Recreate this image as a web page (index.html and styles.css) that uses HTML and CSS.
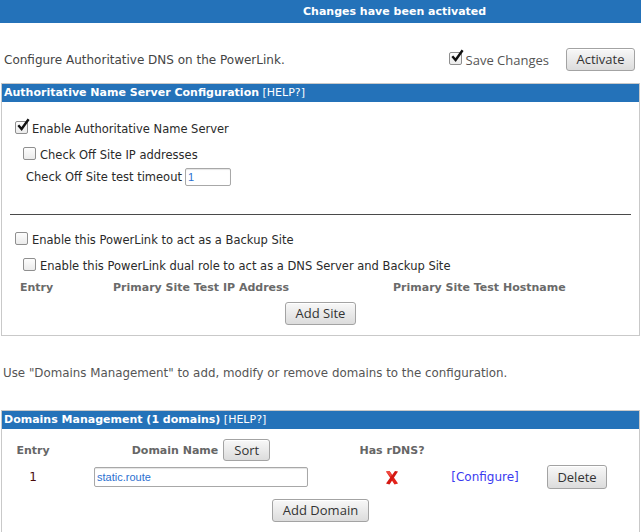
FILE: index.html
```html
<!DOCTYPE html>
<html>
<head>
<meta charset="utf-8">
<link rel="stylesheet" href="styles.css">
</head>
<body>
<div class="topbar"><span>Changes have been activated</span></div>

<div class="intro">
  <span class="intro-text">Configure Authoritative DNS on the PowerLink.</span>
  <label class="save"><span class="cb checked"><svg viewBox="0 0 14 14" width="14" height="14"><path d="M2.3 7.2 L5.6 11 L12.6 1.2" fill="none" stroke="#111" stroke-width="2.4"/></svg></span>Save Changes</label>
  <button class="btn btn-activate">Activate</button>
</div>

<section class="panel panel-ns">
  <div class="panel-head"><b>Authoritative Name Server Configuration</b> [HELP?]</div>
  <div class="panel-body">
    <div class="row lvl1"><span class="cb checked"><svg viewBox="0 0 14 14" width="14" height="14"><path d="M2.3 7.2 L5.6 11 L12.6 1.2" fill="none" stroke="#111" stroke-width="2.4"/></svg></span>Enable Authoritative Name Server</div>
    <div class="row lvl2"><span class="cb"></span>Check Off Site IP addresses</div>
    <div class="row row-timeout">Check Off Site test timeout <input class="field field-timeout" value="1"></div>
    <hr class="sep">
    <div class="row lvl1"><span class="cb"></span>Enable this PowerLink to act as a Backup Site</div>
    <div class="row lvl2"><span class="cb"></span>Enable this PowerLink dual role to act as a DNS Server and Backup Site</div>
    <div class="site-head">
      <span>Entry</span>
      <span>Primary Site Test IP Address</span>
      <span>Primary Site Test Hostname</span>
    </div>
    <div class="center"><button class="btn btn-site">Add Site</button></div>
  </div>
</section>

<p class="note">Use "Domains Management" to add, modify or remove domains to the configuration.</p>

<section class="panel panel-dom">
  <div class="panel-head"><b>Domains Management (1 domains)</b> [HELP?]</div>
  <div class="panel-body">
    <div class="dom-grid">
      <span class="th">Entry</span>
      <span class="th"><span>Domain Name</span> <button class="btn btn-sort">Sort</button></span>
      <span class="th">Has rDNS?</span>
      <span></span>
      <span></span>

      <span class="entry-no">1</span>
      <span><input class="field field-domain" value="static.route"></span>
      <span class="xmark"><svg viewBox="0 0 14 15" width="14" height="15"><path d="M1 1.5 L4.5 1 L13 13.5 L9.5 14.5 Z" fill="#e3221b"/><path d="M10 1 L13 1.5 L4.5 14.5 L1 13.5 Z" fill="#d41812"/><path d="M1 1.5 L4.5 1 L7 4.8 L5.6 6.6 Z" fill="#f04a40"/></svg></span>
      <span class="link">[Configure]</span>
      <span><button class="btn btn-del">Delete</button></span>
    </div>
    <div class="center"><button class="btn btn-dom">Add Domain</button></div>
  </div>
</section>
</body>
</html>
```

FILE: styles.css
```css
html, body {
  margin: 0;
  padding: 0;
  background: #fff;
}
body {
  font-family: "DejaVu Sans", sans-serif;
  font-size: 12px;
  color: #444;
  width: 641px;
  overflow: hidden;
}
.topbar {
  height: 23px;
  background: #2472b9;
  color: #fff;
  font-weight: bold;
  font-size: 11px;
  display: flex;
  align-items: center;
  padding-left: 303px;
  box-sizing: border-box;
}
.intro {
  display: flex;
  align-items: center;
  height: 23px;
  margin: 25px 0 12px 0;
  padding-left: 4px;
}
.intro-text {
  color: #444;
  flex: 1;
}
.save {
  display: flex;
  align-items: center;
  font-family: "Open Sans", "Noto Sans", sans-serif;
  font-size: 13px;
  color: #555;
  margin-right: 17px;
}
.save .cb {
  margin-right: 4px;
  margin-top: -2px;
}
.cb {
  position: relative;
  display: inline-block;
  width: 11px;
  height: 11px;
  border: 1px solid #8f8f8f;
  border-radius: 2px;
  background: linear-gradient(#fdfdfd, #ebebeb);
  flex: none;
}
.cb svg {
  position: absolute;
  left: 0px;
  top: -4px;
}
.btn {
  font-family: "Open Sans", "Noto Sans", sans-serif;
  font-size: 13px;
  color: #333;
  background: linear-gradient(#f8f8f8, #dcdcdc);
  border: 1px solid #a3a3a3;
  border-radius: 3px;
  padding: 0 10px;
  height: 23px;
  line-height: 19px;
  box-shadow: inset 0 1px 0 #fff;
  margin: 0;
}
.btn-activate { width: 69px; padding: 0; margin-right: 6px; }
.panel {
  border: 1px solid #c9c9c9;
  margin: 0 1px;
}
.panel-head {
  background: #2472b9;
  color: #fff;
  font-size: 11px;
  height: 18px;
  line-height: 18px;
  padding-left: 2px;
  white-space: nowrap;
}
.panel-head b { font-weight: bold; }
.panel-ns .panel-body {
  padding: 14px 0 10px 0;
}
.row {
  display: flex;
  align-items: center;
  height: 26px;
  color: #2a2a2a;
  font-size: 11.5px;
}
.row .cb { margin-right: 4px; margin-top: -4px; }
.lvl1 { padding-left: 13px; }
.lvl2 { padding-left: 21px; }
.row-timeout {
  height: 18px;
  padding-left: 24px;
}
.field {
  font-family: "Liberation Sans", Arial, sans-serif;
  font-size: 11px;
  color: #2b6fd0;
  border: 1px solid #a8a8a8;
  border-radius: 2px;
  box-shadow: inset 0 1px 1px #e4e4e4;
  padding: 0 2px;
  height: 18px;
  box-sizing: border-box;
  outline: none;
}
.field-timeout {
  width: 46px;
  margin-left: 3px;
}
.sep {
  border: 0;
  border-top: 1px solid #4a4a4a;
  margin: 28px 8px 12px 8px;
  height: 0;
}
.site-head {
  display: grid;
  grid-template-columns: 93px 280px auto;
  padding-left: 18px;
  height: 16px;
  line-height: 16px;
  font-weight: bold;
  font-size: 11px;
  color: #6a6a6a;
  margin-top: 1px;
}
.center {
  display: flex;
  justify-content: center;
}
.btn-site {
  margin-top: 6px;
  width: 71px;
  padding: 0;
}
.note {
  margin: 29px 0 29px 3px;
  line-height: 16px;
  color: #555;
  font-size: 11.85px;
}
.panel-dom {
  border-bottom: 0;
  height: 130px;
}
.panel-dom .panel-body {
  padding-top: 10px;
}
.dom-grid {
  display: grid;
  grid-template-columns: 62px 274px 108px 78px 106px;
  grid-template-rows: 22px 24px;
  row-gap: 4px;
  align-items: center;
  justify-items: center;
}
.th {
  font-weight: bold;
  font-size: 11px;
  color: #666;
  display: flex;
  align-items: center;
}
.btn-sort {
  width: 47px;
  height: 22px;
  padding: 0;
  margin-left: 5px;
}
.entry-no {
  color: #4a0a0a;
}
.field-domain {
  width: 214px;
  height: 20px;
}
.xmark { display: flex; }
.link { color: #3a3af0; }
.btn-del { width: 60px; padding: 0; height: 24px; }
.btn-dom {
  margin-top: 10px;
  width: 97px;
  padding: 0;
}
```
